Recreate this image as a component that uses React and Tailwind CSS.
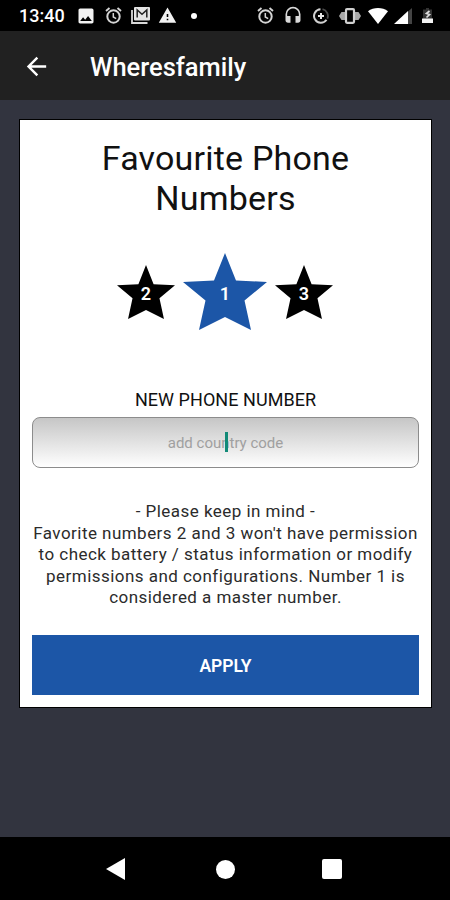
import { MdImage, MdWarning, MdHeadset, MdArrowBack } from "react-icons/md";

// --- Status bar icons ---
const AlarmIcon = () => (
    <svg width="17" height="17" viewBox="0 0 17 17" fill="none" stroke="#d4d4d4">
        <circle cx="8.5" cy="9.500" r="6.200" strokeWidth="2" />
        <path d="M1 4L4.500 1M16 4L12.500 1" strokeWidth="1.9" />
        <path d="M8.300 6v4l2.900 1.700" strokeWidth="1.5" />
    </svg>
);

const MailStackIcon = () => (
    <svg width="19" height="17" viewBox="0 0 19 17" fill="none">
        <path d="M1 3v13h15.500" stroke="#d8d8d8" strokeWidth="1.8" />
        <rect x="3" y="0" width="16" height="13.500" rx="1" fill="#e4e4e4" />
        <path d="M6.200 10.500V3l4.800 4.200L15.800 3v7.500" stroke="#222" strokeWidth="1.5" />
    </svg>
);

const DataSaverIcon = () => (
    <svg width="16" height="16" viewBox="0 0 16 16" fill="none">
        <path d="M9.500 1.200a6.900 6.900 0 0 1 4.800 9.500" stroke="#4a4a4a" strokeWidth="1.8" />
        <path d="M7.500 1.200a6.800 6.800 0 1 0 6 10.600" stroke="#d0d0d0" strokeWidth="2" />
        <path d="M8 5v6M5 8h6" stroke="#e8e8e8" strokeWidth="2" />
    </svg>
);

const VibrateIcon = () => (
    <svg width="22" height="16" viewBox="0 0 22 16">
        <path d="M0 8l2.500-4H6v8H2.500zM22 8l-2.500-4H16v8h3.500z" fill="#a8a8a8" />
        <rect x="7" y="1.200" width="8" height="13.600" rx="1" fill="#000" stroke="#d0d0d0" strokeWidth="2.2" />
    </svg>
);

const WifiIcon = () => (
    <svg width="20" height="16" viewBox="0 0 20 16">
        <path d="M0 3.300C5.500-1.100 14.500-1.100 20 3.300L10 16z" fill="#fff" />
    </svg>
);

const SignalIcon = () => (
    <svg width="18" height="16" viewBox="0 0 18 16">
        <path d="M14 3.500L18 0v16h-4z" fill="#444" />
        <path d="M0 16L14 3v13z" fill="#fff" />
    </svg>
);

const BatteryIcon = () => (
    <svg width="11" height="15" viewBox="0 0 11 15">
        <path d="M4 0h3v1.500h3V11H1V1.500h3z" fill="#333" />
        <path d="M0 10.500h11V15H0z" fill="#f2f2f2" />
        <path d="M7.500 3L4.500 5.500l3 1L4.500 9.500" fill="none" stroke="#ddd" strokeWidth="1.700" />
    </svg>
);

// --- Sub-Components ---
const StatusBar = () => (
    <div className="h-[31px] bg-black flex items-center pl-[19px] pr-[17px] text-[#d8d8d8]">
        <span className="w-12 text-[18px] leading-none font-medium text-white">13:40</span>
        <div className="flex items-center ml-[9px]">
            <MdImage className="size-5 text-[#f2f2f2]" />
            <div className="ml-[9px]"><AlarmIcon /></div>
            <div className="ml-[9px]"><MailStackIcon /></div>
            <MdWarning className="size-[19px] ml-2 text-[#f2f2f2]" />
            <div className="size-[6px] rounded-full bg-white ml-[14px]" />
        </div>
        <div className="flex items-center ml-auto">
            <AlarmIcon />
            <MdHeadset className="size-[20px] ml-[9px]" />
            <div className="ml-[10px]"><DataSaverIcon /></div>
            <div className="ml-[10px]"><VibrateIcon /></div>
            <div className="ml-[7px]"><WifiIcon /></div>
            <div className="ml-[6px]"><SignalIcon /></div>
            <div className="ml-[10px]"><BatteryIcon /></div>
        </div>
    </div>
);

const AppBar = ({ title }) => (
    <div className="h-[69px] pt-px bg-[#212121] flex items-center text-white">
        <button className="ml-[22px]">
            <MdArrowBack className="size-[29px]" />
        </button>
        <h1 className="ml-[39px] mt-[3px] text-[25.5px] leading-none font-medium whitespace-nowrap">{title}</h1>
    </div>
);

const Star = ({ label, sizeClass, colorClass }) => (
    <button className="relative flex items-center justify-center">
        <svg className={`${sizeClass} ${colorClass}`} viewBox="0 0 84 77" preserveAspectRatio="none" fill="currentColor">
            <path d="M42 0L53 27.500L84 29L61.500 47.500L68 77L42 64L16 77L22.500 47.500L0 29L31 27.500z" />
        </svg>
        <span className="absolute inset-0 flex items-center justify-center text-[18px] leading-none font-semibold text-white pt-[5px]">
            {label}
        </span>
    </button>
);

const NavBar = () => (
    <div className="h-[63px] bg-black flex items-center justify-between pl-[106px] pr-[108px] pt-px">
        <svg width="19" height="22" viewBox="0 0 19 22" fill="#fff">
            <path d="M0 11L19 0v22z" />
        </svg>
        <div className="size-[19px] rounded-full bg-white ml-[3px]" />
        <div className="size-5 rounded-[2px] bg-white" />
    </div>
);

export default function App() {
    return (
        <div className="w-[450px] h-[900px] flex flex-col bg-[#32343f] overflow-hidden font-['Roboto',sans-serif]">
            <StatusBar />
            <AppBar title="Wheresfamily" />

            <main className="flex-1 pl-[19px] pr-[18px] pt-[19px]">
                <div className="h-[589px] bg-white border border-black px-3 text-center text-[#111]">
                    <h2 className="pt-[18px] text-[34px] leading-10 tracking-[0.2px]">
                        Favourite Phone
                        <br />
                        Numbers
                    </h2>

                    {/* Favourite slots */}
                    <div className="flex items-center justify-center gap-2 mt-[35px] h-[77px] pr-px">
                        <Star label="2" sizeClass="w-[58px] h-[54px]" colorClass="text-black" />
                        <Star label="1" sizeClass="w-[84px] h-[77px]" colorClass="text-[#1c56a7]" />
                        <Star label="3" sizeClass="w-[58px] h-[54px]" colorClass="text-black" />
                    </div>

                    <p className="mt-[59px] text-[18px] leading-[22px] tracking-[0.05px]">NEW PHONE NUMBER</p>
                    <div className="relative mt-[6px] h-[51px] rounded-lg border border-[#8c8c8c] bg-linear-to-b from-[#c6c6c6] to-white flex items-center justify-center pt-px text-[15px] text-[#a0a0a0]">
                        add country code
                        <span className="absolute left-[192px] top-[14px] w-[2.5px] h-[20px] bg-[#128a78]" />
                    </div>

                    <div className="mt-[33px] text-[17px] leading-[21.6px] tracking-[0.46px] text-[#2b2b2b] whitespace-nowrap">
                        <p>- Please keep in mind -</p>
                        <p>Favorite numbers 2 and 3 won't have permission</p>
                        <p>to check battery / status information or modify</p>
                        <p>permissions and configurations. Number 1 is</p>
                        <p>considered a master number.</p>
                    </div>

                    <button className="mt-[26px] w-full h-[60px] pt-[2px] bg-[#1c56a7] text-white text-[17.5px] font-semibold">
                        APPLY
                    </button>
                </div>
            </main>

            <NavBar />
        </div>
    );
}
